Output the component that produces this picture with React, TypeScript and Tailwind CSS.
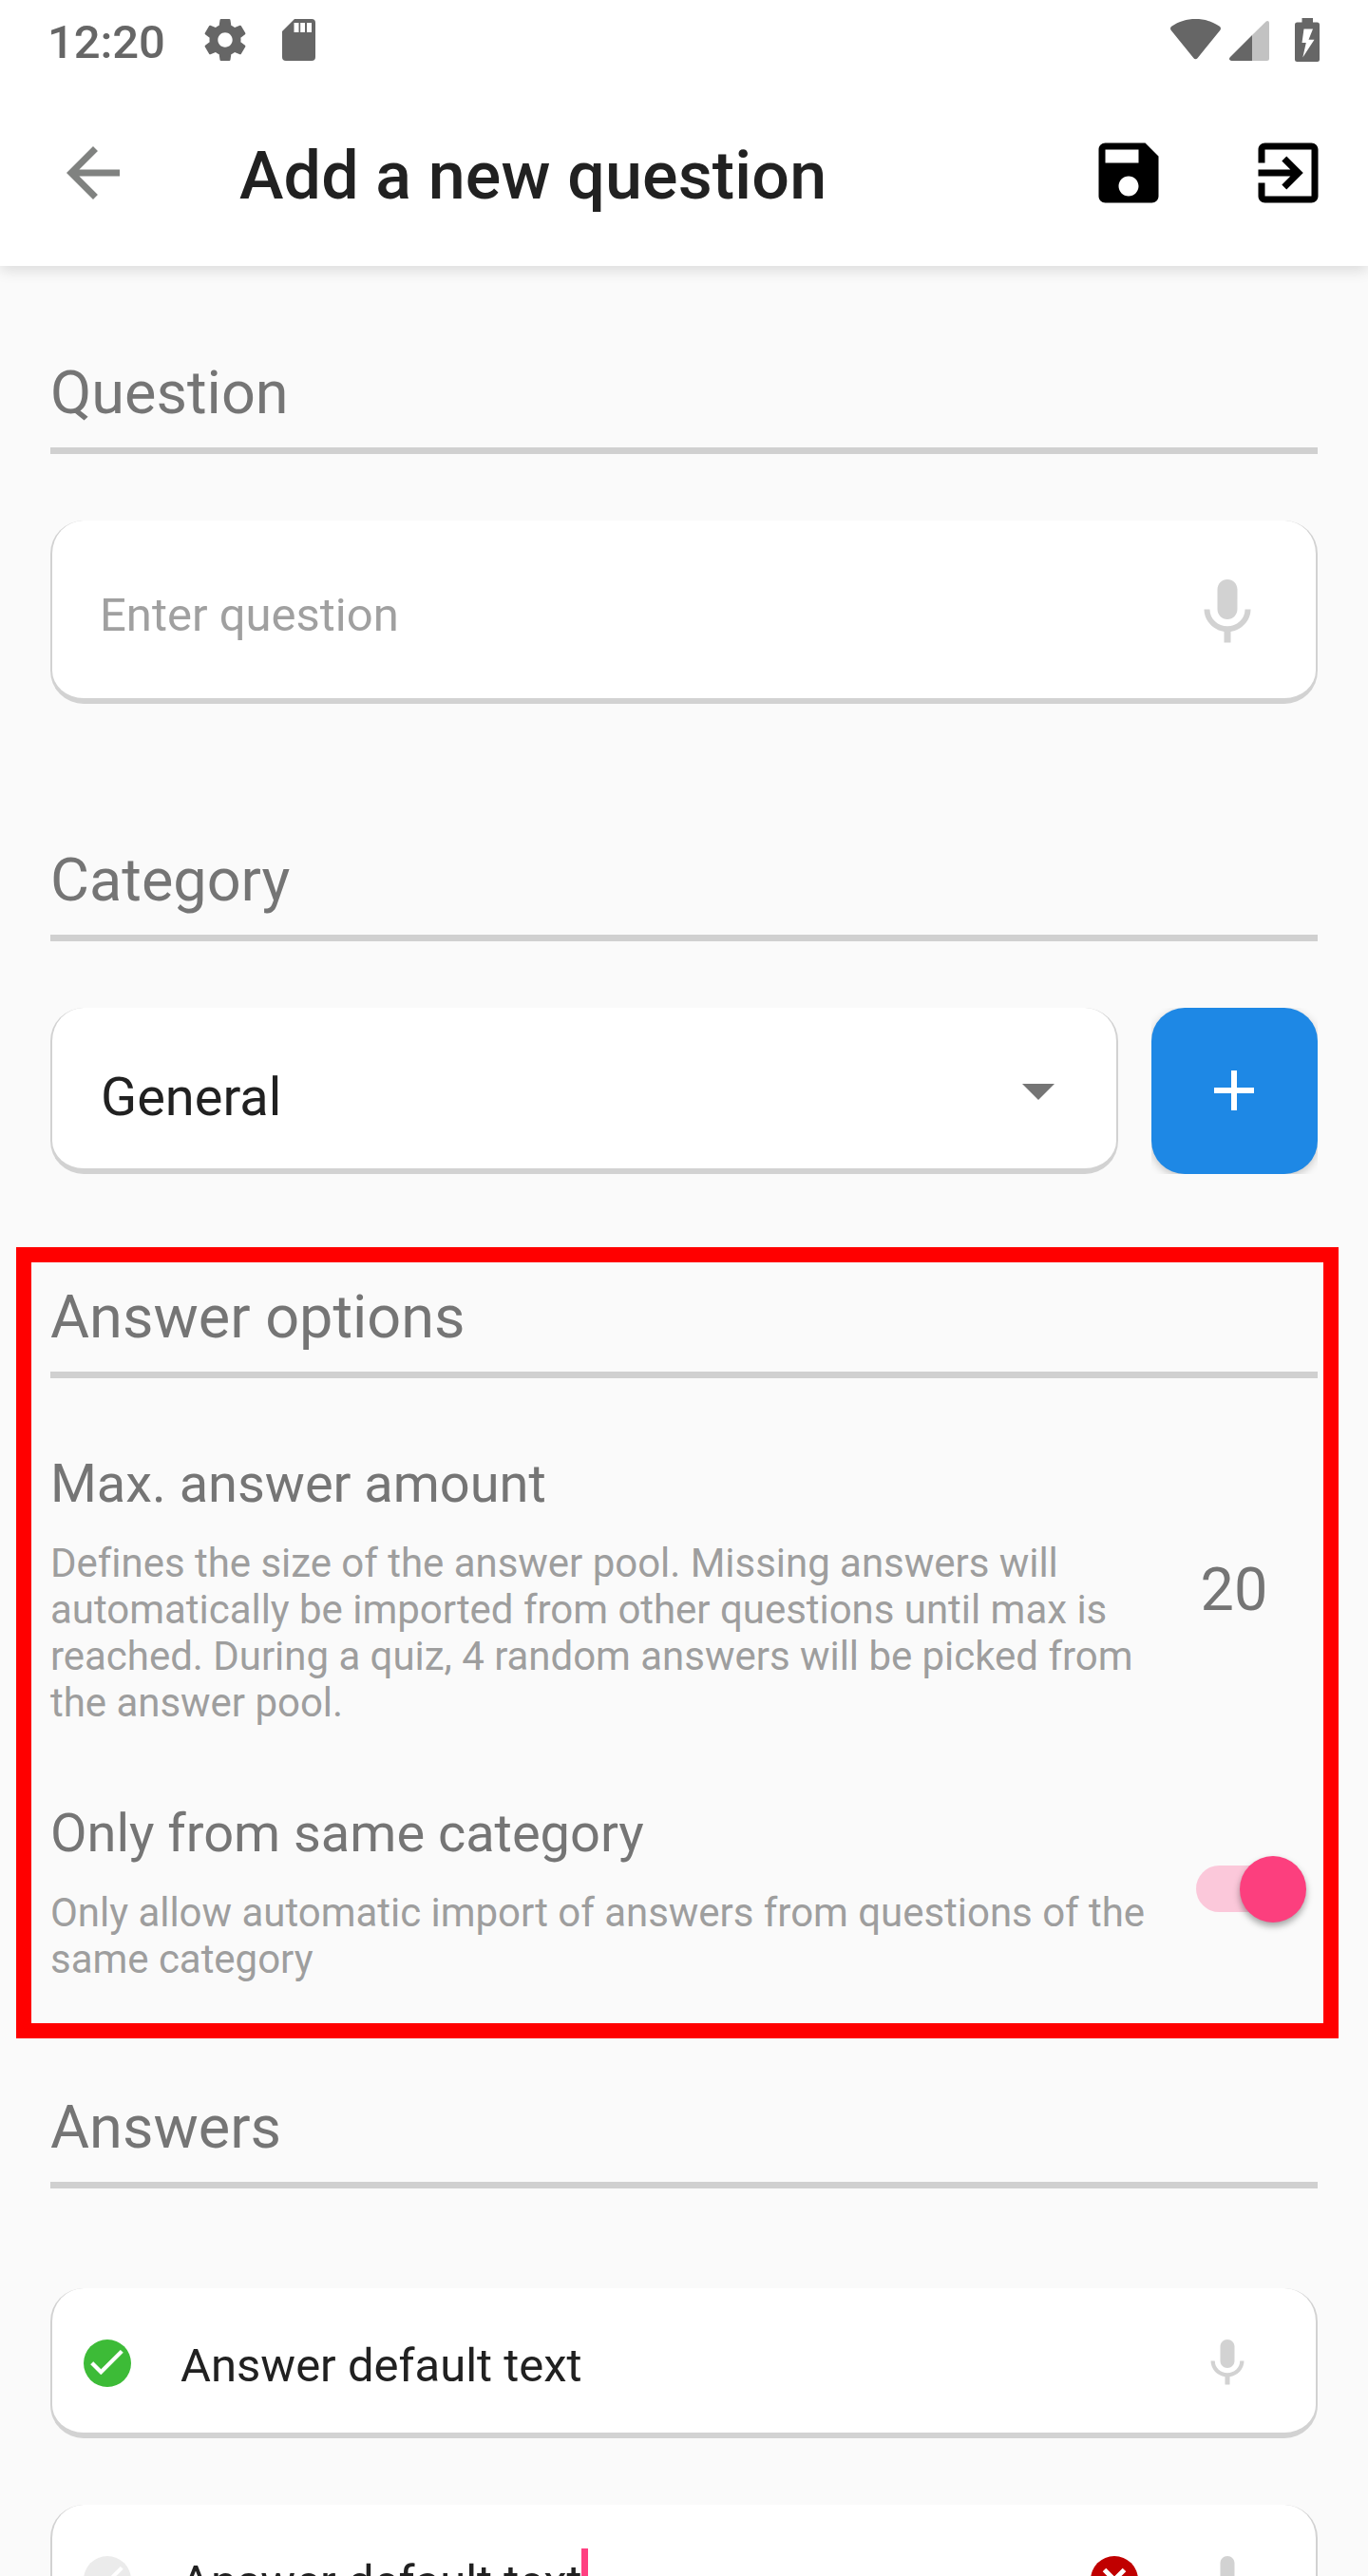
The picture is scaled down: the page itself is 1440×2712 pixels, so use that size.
import type { ReactNode } from "react";

const CARD =
  "flex w-full bg-white rounded-[35px] border-[#d2d2d2] border-l-2 border-r-2 border-b-[6px] border-t-0";

function SectionTitle({ children }: { children: ReactNode }) {
  return (
    <h2 className="box-content h-[63px] border-b-[7px] border-[#d0d0d0] pb-[26px] text-[63px] leading-[63px] text-[#757575]">
      {children}
    </h2>
  );
}

function Mic({ className }: { className: string }) {
  return (
    <svg viewBox="0 0 24 24" className={className} fill="#d2d2d2">
      <path d="M12 14c1.66 0 2.99-1.34 2.99-3L15 5c0-1.66-1.34-3-3-3S9 3.34 9 5v6c0 1.66 1.34 3 3 3zm5.3-3c0 3-2.54 5.1-5.3 5.1S6.7 14 6.7 11H5c0 3.41 2.72 6.23 6 6.72V21h2v-3.28c3.28-.48 6-3.3 6-6.72h-1.7z" />
    </svg>
  );
}

function CheckBadge({ color }: { color: string }) {
  return (
    <svg viewBox="0 0 50 50" className="size-[50px] shrink-0">
      <circle cx="25" cy="25" r="25" fill={color} />
      <path
        transform="translate(0.94 0.33) scale(1.93)"
        fill="#fff"
        stroke="#fff"
        strokeWidth="0.25"
        d="M9 16.2L4.8 12l-1.4 1.4L9 19 21 7l-1.4-1.4z"
      />
    </svg>
  );
}

function StatusBar() {
  return (
    <div className="flex h-[84px] items-start pl-[50px] pr-[51px] pt-[20px]">
      <span className="w-[165px] text-[49px] leading-[49px] font-medium tracking-[-0.1px] text-[#666]">12:20</span>
      <svg viewBox="2 2 20 20" className="size-[44px]" fill="#666">
        <path d="M19.43 12.98c.04-.32.07-.64.07-.98s-.03-.66-.07-.98l2.11-1.65c.19-.15.24-.42.12-.64l-2-3.46c-.12-.22-.39-.3-.61-.22l-2.49 1c-.52-.4-1.08-.73-1.69-.98l-.38-2.65C14.46 2.18 14.25 2 14 2h-4c-.25 0-.46.18-.49.42l-.38 2.65c-.61.25-1.17.59-1.69.98l-2.49-1c-.23-.09-.49 0-.61.22l-2 3.46c-.13.22-.07.49.12.64l2.11 1.65c-.04.32-.07.65-.07.98s.03.66.07.98l-2.11 1.65c-.19.15-.24.42-.12.64l2 3.46c.12.22.39.3.61.22l2.49-1c.52.4 1.08.73 1.69.98l.38 2.65c.03.24.24.42.49.42h4c.25 0 .46-.18.49-.42l.38-2.65c.61-.25 1.17-.59 1.69-.98l2.49 1c.23.09.49 0 .61-.22l2-3.46c.12-.22.07-.49-.12-.64l-2.11-1.65zM12 15.5c-1.93 0-3.5-1.57-3.5-3.5s1.57-3.5 3.5-3.5 3.5 1.57 3.5 3.5-1.57 3.5-3.5 3.5z" />
      </svg>
      <svg viewBox="0 0 35 44" className="ml-[38px] h-[44px] w-[35px]">
        <path fill="#666" d="M13 0H31a4 4 0 0 1 4 4V40a4 4 0 0 1-4 4H4a4 4 0 0 1-4-4V13z" />
        <path fill="#fff" d="M12.5 4h5v10h-5zM19.2 4h4.8v10h-4.8zM26 4h5v10h-5z" />
      </svg>
      <svg viewBox="0 0 53 43" className="ml-auto h-[43px] w-[53px]">
        <path
          fill="#666"
          d="M1.200 7.800C9 2.500 17 0 26.500 0S44 2.500 51.800 7.800C53.300 9 53.300 10.500 52.200 12L28.500 41.200C27.500 42.500 25.500 42.500 24.500 41.200L.8 12C-.3 10.500-.3 9 1.200 7.800z"
        />
      </svg>
      <svg viewBox="0 0 42 42" className="ml-[9px] mt-[2px] size-[42px]">
        <path fill="#c2c2c2" d="M24 15L38.500 .8C40.200-.6 42 0 42 2.500V39.500Q42 42 39.500 42H24z" />
        <path fill="#666" d="M24 15V42H2.500C0 42-.8 40 1 38z" />
      </svg>
      <svg viewBox="0 0 26 46" className="-mt-px ml-[27px] h-[46px] w-[26px]">
        <path
          fill="#666"
          d="M7.500 0H19V4.500H23.500Q26 4.500 26 7V43.500Q26 46 23.500 46H2.500Q0 46 0 43.500V7Q0 4.500 2.500 4.500H7.500z"
        />
        <path fill="#fff" d="M9.500 11.500H19L14.500 22.800H20.500L8.300 41.500L11.800 26H7.500z" />
      </svg>
    </div>
  );
}

function Toolbar() {
  return (
    <div className="flex h-[196px] items-center pl-[56px] pr-[42px]">
      <svg viewBox="0 0 24 24" className="size-[84px]" fill="#808280">
        <path d="M20 11H7.83l5.59-5.59L12 4l-8 8 8 8 1.41-1.41L7.83 13H20v-2z" />
      </svg>
      <h1 className="ml-[112px] mt-[6px] text-[70px] leading-[70px] font-medium tracking-[0.15px] text-[#212121]">
        Add a new question
      </h1>
      <svg viewBox="0 0 24 24" className="ml-auto size-[84px]" fill="#000">
        <path d="M17 3H5c-1.11 0-2 .9-2 2v14c0 1.1.89 2 2 2h14c1.1 0 2-.9 2-2V7l-4-4zm-5 16c-1.66 0-3-1.34-3-3s1.34-3 3-3 3 1.34 3 3-1.34 3-3 3zm3-10H5V5h10v4z" />
      </svg>
      <svg viewBox="0 0 24 24" className="ml-[84px] size-[84px]" fill="#000">
        <path d="M10.09 15.59L11.5 17l5-5-5-5-1.41 1.41L12.67 11H3v2h9.67l-2.58 2.59zM19 3H5c-1.11 0-2 .9-2 2v4h2V5h14v14H5v-4H3v4c0 1.1.89 2 2 2h14c1.1 0 2-.9 2-2V5c0-1.1-.9-2-2-2z" />
      </svg>
    </div>
  );
}

function Option({ title, text, children }: { title: string; text: string; children: ReactNode }) {
  return (
    <div className="flex">
      <div className="w-[1161px] shrink-0">
        <h3 className="text-[56px] leading-[56px] tracking-[-0.03px] text-[#757575]">{title}</h3>
        <p className="mt-[31px] text-[42px] leading-[49px] tracking-[-0.03px] text-[#9e9e9e] [font-variant-ligatures:common-ligatures]">
          {text}
        </p>
      </div>
      {children}
    </div>
  );
}

export default function App() {
  return (
    <div className="h-[2712px] w-[1440px] overflow-hidden bg-[#fafafa] [font-family:Roboto,sans-serif]">
      <header className="relative h-[280px] bg-white shadow-[0_5px_14px_rgba(0,0,0,0.12)]">
        <StatusBar />
        <Toolbar />
      </header>

      <main className="px-[53px] pt-[102px]">
        <SectionTitle>Question</SectionTitle>
        <div className={CARD + " mt-[70px] h-[193px] pl-[50px] pr-[51px]"}>
          <span className="mt-[75px] text-[49px] leading-[49px] text-[#a0a0a0]">Enter question</span>
          <Mic className="ml-auto mt-[55px] size-[84px]" />
        </div>

        <div className="mt-[154px]">
          <SectionTitle>Category</SectionTitle>
        </div>
        <div className="mt-[70px] flex h-[175px] gap-[35px]">
          <div className={CARD + " pl-[51px] pr-[65px]"}>
            <span className="mt-[66px] text-[56px] leading-[56px] text-[#212121]">General</span>
            <svg viewBox="0 0 34 17" className="ml-auto mt-[80px] h-[17px] w-[34px]" fill="#757575">
              <path d="M0 0H34L17 17z" />
            </svg>
          </div>
          <div className="w-[175px] shrink-0 overflow-hidden">
            <button className="flex size-[175px] items-center justify-center rounded-[35px] bg-[#1e88e5] pb-[2px] pr-[2px] shadow-[0_3px_10px_rgba(0,0,0,0.22)]">
              <svg viewBox="0 0 42 42" className="size-[42px]" fill="#fff">
                <path d="M18 0h6v18h18v6H24v18h-6V24H0v-6h18z" />
              </svg>
            </button>
          </div>
        </div>

        <section className="-ml-[36px] mt-[77px] w-[1392px] border-[16px] border-[#ff0000] pb-[43px] pl-[20px] pr-[6px] pt-[26px]">
          <SectionTitle>Answer options</SectionTitle>
          <div className="mt-[83px]">
            <Option
              title="Max. answer amount"
              text="Defines the size of the answer pool. Missing answers will automatically be imported from other questions until max is reached. During a quiz, 4 random answers will be picked from the answer pool."
            >
              <span className="mt-[108px] grow pr-[3px] text-center text-[63px] leading-[63px] text-[#757575]">20</span>
            </Option>
          </div>
          <div className="mt-[85px]">
            <Option
              title="Only from same category"
              text="Only allow automatic import of answers from questions of the same category"
            >
              <div className="ml-[45px] mt-[62px] flex h-[49px] w-[112px] items-center justify-end rounded-full bg-[#fbc8da]">
                <div className="-mr-[4px] size-[70px] shrink-0 rounded-full bg-[#fc3f7e] shadow-[0_4px_7px_rgba(0,0,0,0.35)]" />
              </div>
            </Option>
          </div>
        </section>

        <div className="mt-[62px]">
          <SectionTitle>Answers</SectionTitle>
        </div>
        <div className={CARD + " mt-[105px] h-[158px] pl-[33px] pr-[63px] pt-[54px]"}>
          <CheckBadge color="#3dbb37" />
          <span className="ml-[52px] mt-[3px] text-[49px] leading-[49px] text-[#212121]">Answer default text</span>
          <Mic className="-mt-[5px] ml-auto size-[60px]" />
        </div>
        <div className={CARD + " mt-[70px] h-[158px] pl-[33px] pr-[63px] pt-[54px]"}>
          <CheckBadge color="#ebebeb" />
          <span className="ml-[52px] mt-[3px] text-[49px] leading-[49px] text-[#212121]">Answer default text</span>
          <span className="-ml-px -mt-[8px] h-[60px] w-[7px] bg-[#ff4081]" />
          <svg viewBox="0 0 50 50" className="ml-auto size-[50px]">
            <circle cx="25" cy="25" r="25" fill="#c00000" />
            <path d="M14.5 14.5l21 21M35.5 14.5l-21 21" stroke="#fff" strokeWidth="5" />
          </svg>
          <Mic className="-mt-[5px] ml-[64px] size-[60px]" />
        </div>
      </main>
    </div>
  );
}
